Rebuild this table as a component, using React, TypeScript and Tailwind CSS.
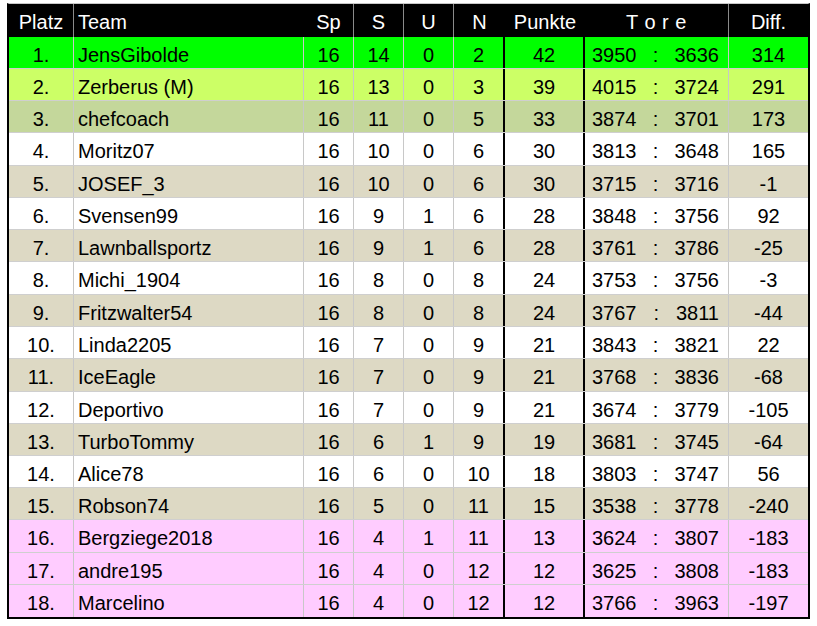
type Row = {
  pos: number;
  team: string;
  sp: number;
  s: number;
  u: number;
  n: number;
  pkt: number;
  tf: number;
  ta: number;
};

const rows: Row[] = [
  { pos: 1, team: "JensGibolde", sp: 16, s: 14, u: 0, n: 2, pkt: 42, tf: 3950, ta: 3636 },
  { pos: 2, team: "Zerberus (M)", sp: 16, s: 13, u: 0, n: 3, pkt: 39, tf: 4015, ta: 3724 },
  { pos: 3, team: "chefcoach", sp: 16, s: 11, u: 0, n: 5, pkt: 33, tf: 3874, ta: 3701 },
  { pos: 4, team: "Moritz07", sp: 16, s: 10, u: 0, n: 6, pkt: 30, tf: 3813, ta: 3648 },
  { pos: 5, team: "JOSEF_3", sp: 16, s: 10, u: 0, n: 6, pkt: 30, tf: 3715, ta: 3716 },
  { pos: 6, team: "Svensen99", sp: 16, s: 9, u: 1, n: 6, pkt: 28, tf: 3848, ta: 3756 },
  { pos: 7, team: "Lawnballsportz", sp: 16, s: 9, u: 1, n: 6, pkt: 28, tf: 3761, ta: 3786 },
  { pos: 8, team: "Michi_1904", sp: 16, s: 8, u: 0, n: 8, pkt: 24, tf: 3753, ta: 3756 },
  { pos: 9, team: "Fritzwalter54", sp: 16, s: 8, u: 0, n: 8, pkt: 24, tf: 3767, ta: 3811 },
  { pos: 10, team: "Linda2205", sp: 16, s: 7, u: 0, n: 9, pkt: 21, tf: 3843, ta: 3821 },
  { pos: 11, team: "IceEagle", sp: 16, s: 7, u: 0, n: 9, pkt: 21, tf: 3768, ta: 3836 },
  { pos: 12, team: "Deportivo", sp: 16, s: 7, u: 0, n: 9, pkt: 21, tf: 3674, ta: 3779 },
  { pos: 13, team: "TurboTommy", sp: 16, s: 6, u: 1, n: 9, pkt: 19, tf: 3681, ta: 3745 },
  { pos: 14, team: "Alice78", sp: 16, s: 6, u: 0, n: 10, pkt: 18, tf: 3803, ta: 3747 },
  { pos: 15, team: "Robson74", sp: 16, s: 5, u: 0, n: 11, pkt: 15, tf: 3538, ta: 3778 },
  { pos: 16, team: "Bergziege2018", sp: 16, s: 4, u: 1, n: 11, pkt: 13, tf: 3624, ta: 3807 },
  { pos: 17, team: "andre195", sp: 16, s: 4, u: 0, n: 12, pkt: 12, tf: 3625, ta: 3808 },
  { pos: 18, team: "Marcelino", sp: 16, s: 4, u: 0, n: 12, pkt: 12, tf: 3766, ta: 3963 },
];

function rowBg(pos: number) {
  if (pos === 1) return "bg-[#00ff00]";
  if (pos === 2) return "bg-[#ccff66]";
  if (pos === 3) return "bg-[#c4d79b]";
  if (pos >= 16) return "bg-[#ffccff]";
  return pos % 2 === 0 ? "bg-white" : "bg-[#ddd9c4]";
}

// rows that come out one pixel taller in the screenshot
const tall = [3, 7, 10, 15];

const hc = "flex items-center pt-[2px]";
const bc = "flex items-center pt-[4px]";

export default function App() {
  return (
    <div className="min-h-screen bg-white pl-[7px] pt-[3px] font-['Liberation_Sans',Arial,sans-serif] text-[20px] text-black">
      <div className="w-[803px] border-t border-t-[#c8c8c8] border-x-2 border-x-black border-b-2 border-b-black">
        {/* Kopfzeile */}
        <div className="flex h-[33px] bg-black text-white">
          <div className={`${hc} w-[65px] justify-center border-r border-[#8a8a8a]`}>Platz</div>
          <div className={`${hc} w-[230px] pl-[4px]`}>Team</div>
          <div className={`${hc} w-[50px] justify-center border-r border-[#8a8a8a]`}>Sp</div>
          <div className={`${hc} w-[50px] justify-center border-r border-[#8a8a8a]`}>S</div>
          <div className={`${hc} w-[50px] justify-center border-r border-[#8a8a8a]`}>U</div>
          <div className={`${hc} w-[51px] justify-center`}>N</div>
          <div className={`${hc} w-[80px] justify-center`}>Punkte</div>
          <div className={`${hc} w-[144px] justify-center border-r border-[#8a8a8a] tracking-[0.5px] whitespace-pre`}>T o r e</div>
          <div className={`${hc} w-[79px] justify-center`}>Diff.</div>
        </div>

        {rows.map((r, i) => (
          <div
            key={r.pos}
            className={`flex ${tall.includes(i) ? "h-[33px]" : "h-[32px]"} ${i < rows.length - 1 ? "border-b border-[#cfcfcf]" : ""} ${rowBg(r.pos)}`}
          >
            <div className={`${bc} w-[65px] justify-center border-r border-[#c8c8c8]`}>{r.pos}.</div>
            <div className={`${bc} w-[230px] border-r border-[#c8c8c8] pl-[4px]`}>{r.team}</div>
            <div className={`${bc} w-[50px] justify-center border-r border-[#c8c8c8]`}>{r.sp}</div>
            <div className={`${bc} w-[50px] justify-center border-r border-[#c8c8c8]`}>{r.s}</div>
            <div className={`${bc} w-[50px] justify-center border-r border-[#c8c8c8]`}>{r.u}</div>
            <div className={`${bc} w-[51px] justify-center border-r-2 border-black`}>{r.n}</div>
            <div className={`${bc} w-[80px] justify-center border-r-2 border-black`}>{r.pkt}</div>
            <div className={`${bc} w-[144px] justify-between border-r border-[#c8c8c8] pl-[7px] pr-[9px]`}>
              <span>{r.tf}</span>
              <span>:</span>
              <span>{r.ta}</span>
            </div>
            <div className={`${bc} w-[79px] justify-center`}>{r.tf - r.ta}</div>
          </div>
        ))}
      </div>
    </div>
  );
}
